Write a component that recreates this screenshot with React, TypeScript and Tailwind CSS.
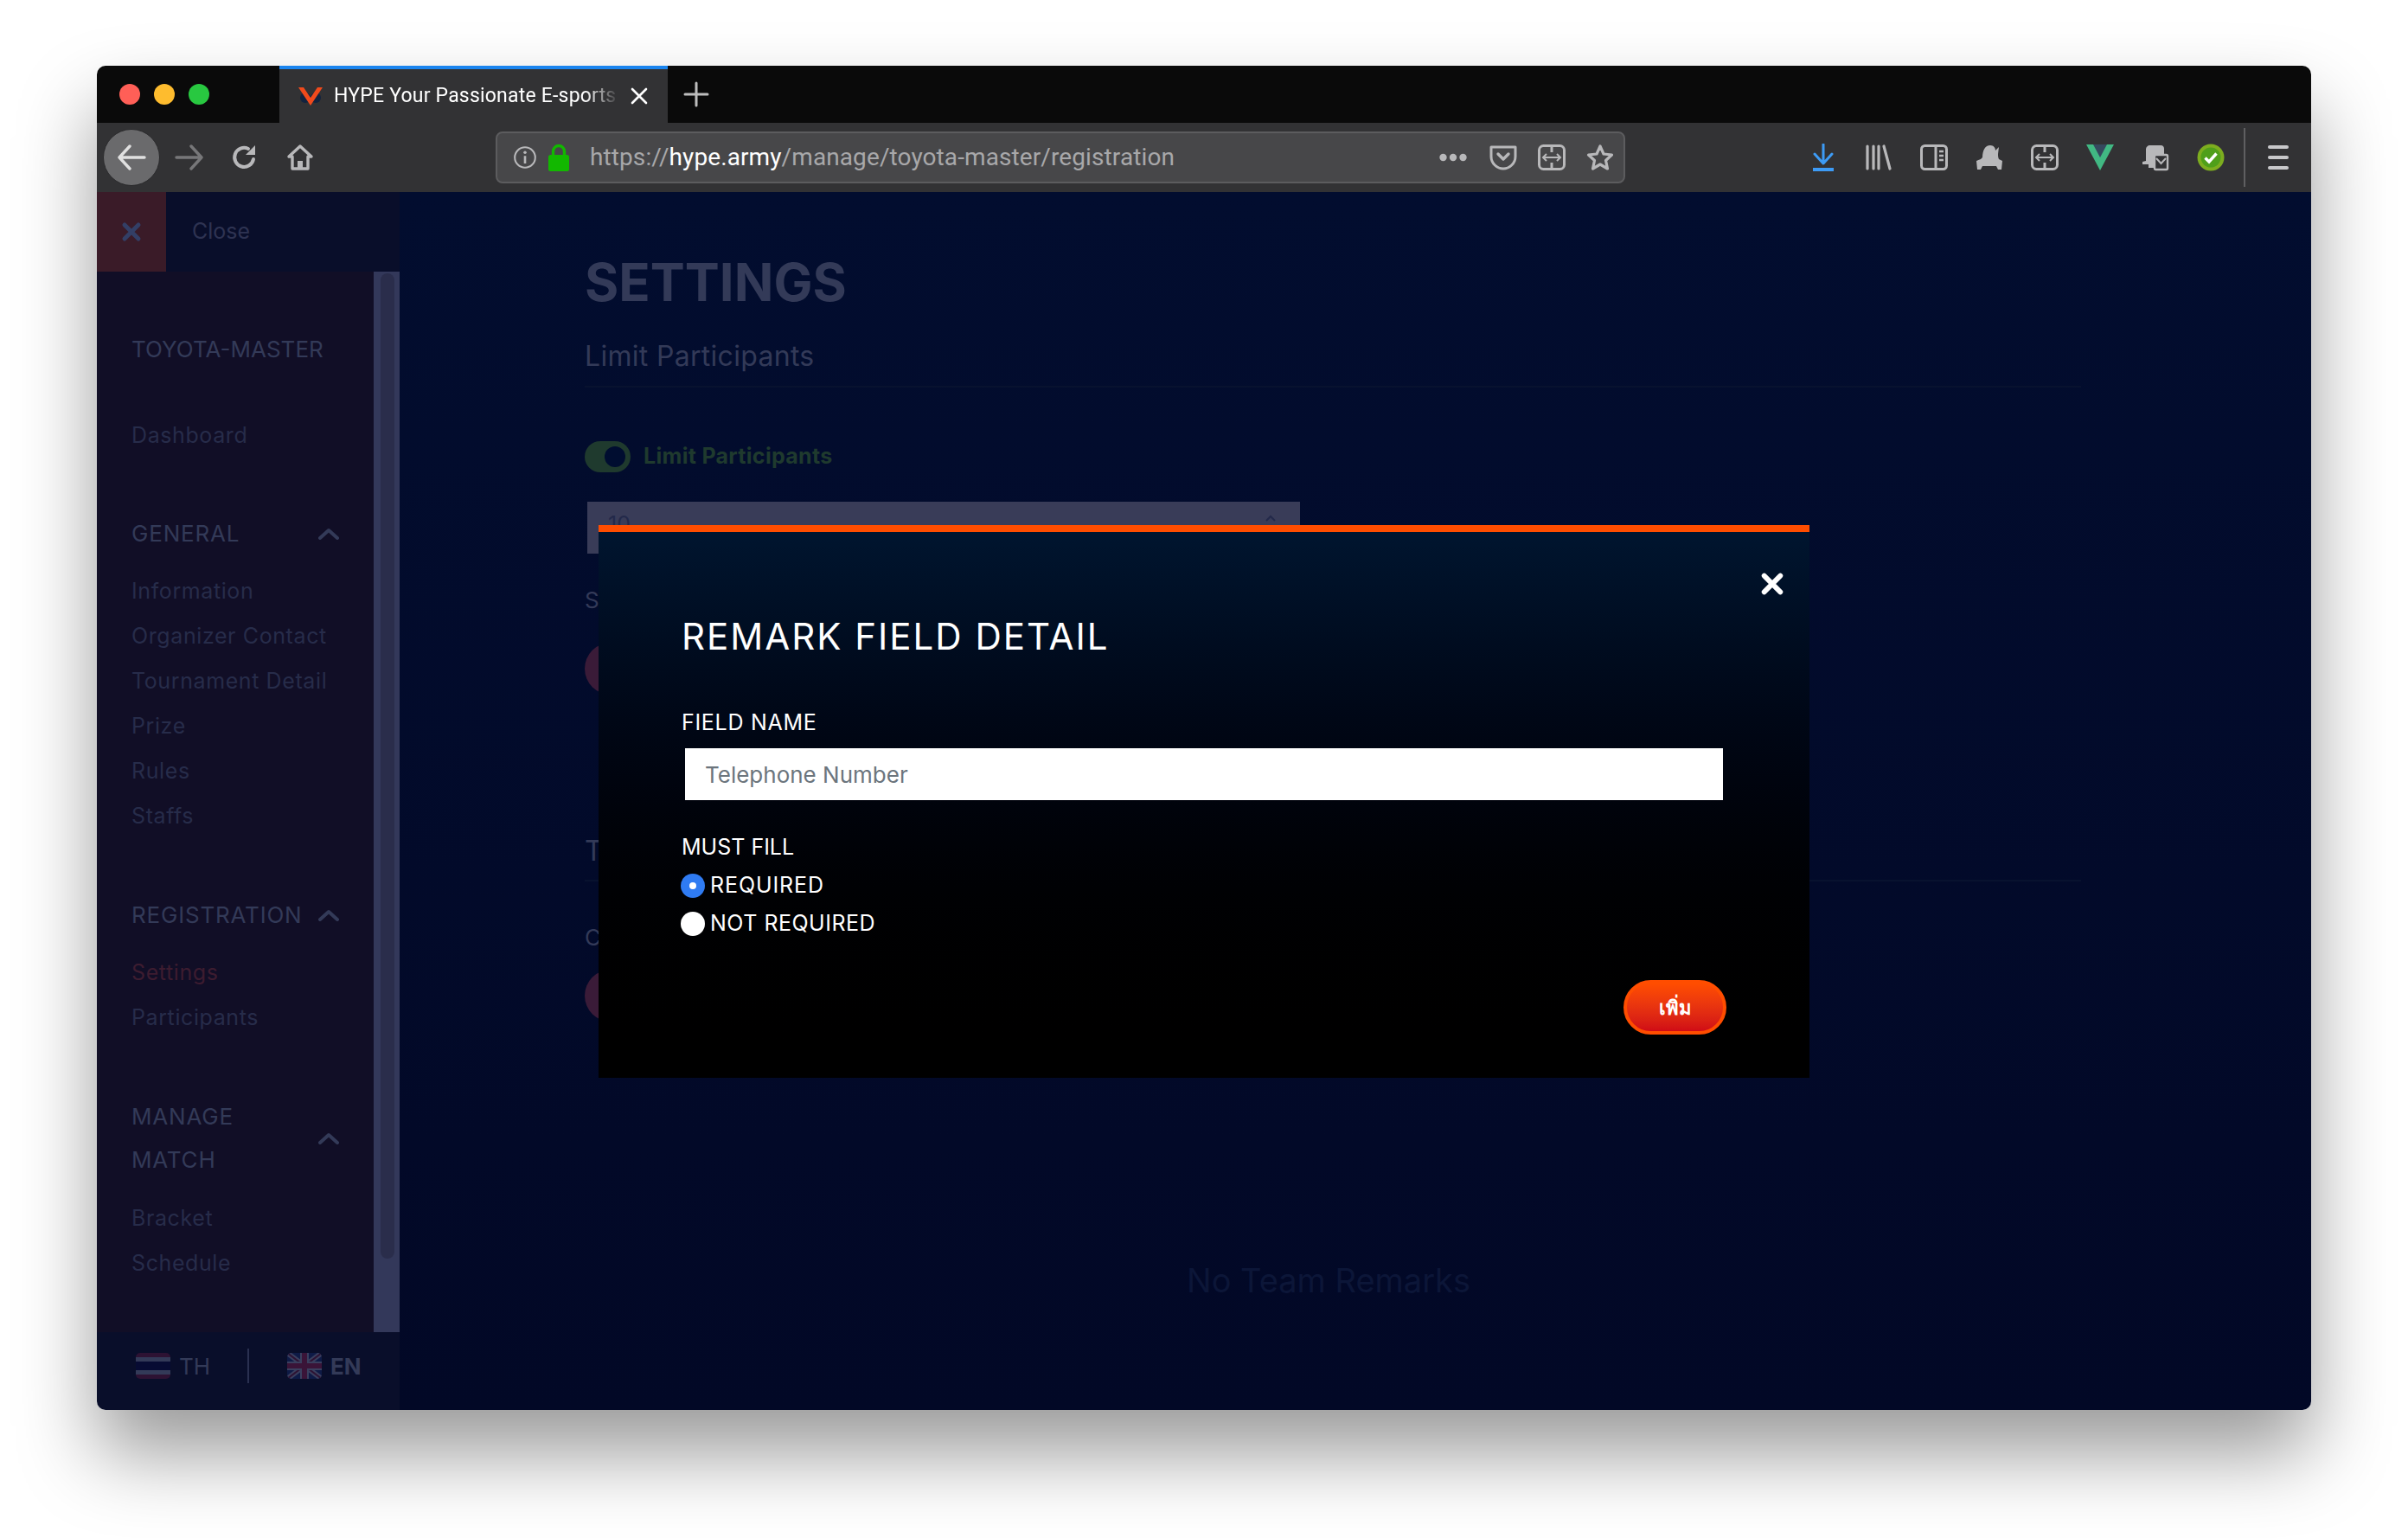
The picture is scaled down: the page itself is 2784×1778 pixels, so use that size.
import React from "react";

const G = "#b8b8ba";
const sans = "font-['Inter','Noto_Sans',sans-serif]";

function X({ size, color, w = 4 }: { size: number; color: string; w?: number }) {
  return (
    <svg width={size} height={size} viewBox="0 0 24 24" fill="none">
      <path d="M4 4L20 20M20 4L4 20" stroke={color} strokeWidth={w} strokeLinecap="round" />
    </svg>
  );
}

function Chevron() {
  return (
    <svg width="24" height="14" viewBox="0 0 24 14" fill="none">
      <path d="M2 12L12 3L22 12" stroke="#333a58" strokeWidth="4" strokeLinecap="round" strokeLinejoin="round" />
    </svg>
  );
}

function Icon({ w = 32, h = 32, vb = "0 0 32 32", children }: { w?: number; h?: number; vb?: string; children: React.ReactNode }) {
  return (
    <svg width={w} height={h} viewBox={vb} fill="none" className="shrink-0">
      {children}
    </svg>
  );
}

function ExtIcon() {
  return (
    <Icon>
      <rect x="1.5" y="2.5" width="29" height="27" rx="5" stroke={G} strokeWidth="3" />
      <path d="M16 3V10M16 22V29" stroke={G} strokeWidth="3" />
      <path d="M6 16H26M10 12L6 16L10 20M22 12L26 16L22 20" stroke={G} strokeWidth="2" />
    </Icon>
  );
}

function NavHead({ children }: { children: React.ReactNode }) {
  return (
    <div className="flex items-center justify-between pr-[40px] text-[26px] text-[#333a58]">
      <span className="leading-[50px] tracking-[0.8px]">{children}</span>
      <Chevron />
    </div>
  );
}

function NavItem({ label, red }: { label: string; red?: boolean }) {
  return (
    <div className={`h-[52px] flex items-center text-[25px] tracking-[0.6px] ${red ? "text-[#3d1c30]" : "text-[#272c4a]"}`}>
      {label}
    </div>
  );
}

function Radio({ checked, label, track }: { checked?: boolean; label: string; track: string }) {
  return (
    <div className="h-[44px] flex items-center gap-[6px]">
      <div className={`w-[28px] h-[28px] rounded-full flex items-center justify-center ${checked ? "bg-[#2f7bf2]" : "bg-white"}`}>
        {checked && <div className="w-[8px] h-[8px] rounded-full bg-white" />}
      </div>
      <span className={`text-[25px] text-white ${track}`}>{label}</span>
    </div>
  );
}

export default function App() {
  return (
    <div className={`w-[2784px] h-[1778px] bg-white pl-[112px] pt-[76px] overflow-hidden ${sans}`}>
      <div className="relative w-[2560px] h-[1554px] rounded-[10px] overflow-hidden flex flex-col shadow-[0_50px_90px_rgba(0,0,0,0.4)]">
        {/* tab bar */}
        <div className="h-[66px] bg-[#0a0a0a] flex items-stretch shrink-0">
          <div className="w-[211px] flex items-center pl-[26px] gap-[16px]">
            <div className="w-[24px] h-[24px] rounded-full bg-[#ff5f57]" />
            <div className="w-[24px] h-[24px] rounded-full bg-[#febc2e]" />
            <div className="w-[24px] h-[24px] rounded-full bg-[#28c840]" />
          </div>
          <div className="w-[449px] bg-[#323234] border-t-[4px] border-[#1a84ee] flex items-center pl-[21px] relative">
            <svg width="30" height="26" viewBox="0 0 30 26" className="shrink-0">
              <circle cx="9" cy="15" r="6" fill="#12233f" />
              <circle cx="21" cy="15" r="6" fill="#12233f" />
              <path d="M1 3H7L15 15L23 3H29L15 24Z" fill="#f04a1c" />
            </svg>
            <span className="ml-[12px] text-[23px] tracking-[0.2px] text-white whitespace-nowrap w-[330px] overflow-hidden font-['Roboto',sans-serif] [mask-image:linear-gradient(90deg,black_88%,transparent)]">
              HYPE Your Passionate E-sports
            </span>
            <div className="absolute left-[404px] top-[19px]"><X size={24} color="#ffffff" w={2.6} /></div>
          </div>
          <div className="flex items-center pl-[18px]">
            <svg width="30" height="30" viewBox="0 0 30 30"><path d="M15 2V28M2 15H28" stroke="#bdbdbd" strokeWidth="3" strokeLinecap="round" /></svg>
          </div>
        </div>

        {/* toolbar */}
        <div className="h-[80px] bg-[#323234] flex items-center shrink-0 relative">
          <div className="ml-[7px] w-[66px] h-[66px] rounded-full bg-[#6a6a6c] border border-[#2a2a2c] flex items-center justify-center">
            <svg width="34" height="30" viewBox="0 0 34 30" fill="none"><path d="M32 15H3M15 2L3 15L15 28" stroke="#e0e0e0" strokeWidth="3.4" strokeLinecap="round" strokeLinejoin="round" /></svg>
          </div>
          <div className="ml-[17px]">
            <svg width="34" height="30" viewBox="0 0 34 30" fill="none"><path d="M2 15H31M19 2L31 15L19 28" stroke="#777779" strokeWidth="3.4" strokeLinecap="round" strokeLinejoin="round" /></svg>
          </div>
          <div className="ml-[31px]">
            <Icon>
              <path d="M26 18A11 11 0 1 1 20 6" stroke={G} strokeWidth="4" strokeLinecap="round" />
              <path d="M28 2V13H17Z" fill={G} />
            </Icon>
          </div>
          <div className="ml-[32px]">
            <Icon>
              <path d="M16 3L3 15H7V29H25V15H29Z" stroke={G} strokeWidth="3.4" strokeLinejoin="round" />
              <path d="M13 29V20H19V29Z" fill={G} />
            </Icon>
          </div>
          {/* url bar */}
          <div className="ml-[210px] w-[1306px] h-[60px] rounded-[8px] bg-[#474749] border-2 border-[#5c5c5e] flex items-center pl-[18px] pr-[11px] font-['Roboto',sans-serif]">
            <Icon w={28} h={28}>
              <circle cx="16" cy="16" r="13.5" stroke={G} strokeWidth="2.4" />
              <circle cx="16" cy="9.5" r="2" fill={G} />
              <path d="M16 14V24" stroke={G} strokeWidth="3" />
            </Icon>
            <div className="ml-[12px]">
              <svg width="26" height="32" viewBox="0 0 26 32" fill="none">
                <path d="M6.5 14V9A6.5 6.5 0 0 1 19.5 9V14" stroke="#12b800" strokeWidth="3.4" />
                <rect x="1" y="13" width="24" height="19" rx="2.5" fill="#12b800" />
              </svg>
            </div>
            <span className="ml-[23px] text-[28px] tracking-[0.1px] text-[#a8a8aa] whitespace-nowrap">
              https://<span className="text-white">hype.army</span>/manage/toyota-master/registration
            </span>
            <div className="ml-auto flex items-center">
              <svg width="32" height="10" viewBox="0 0 32 10" className="mr-[26px]">
                <circle cx="4.5" cy="5" r="4.2" fill={G} /><circle cx="16" cy="5" r="4.2" fill={G} /><circle cx="27.5" cy="5" r="4.2" fill={G} />
              </svg>
              <div className="mr-[24px]">
                <Icon>
                  <path d="M2 4H30V15C30 23 23 29 16 29C9 29 2 23 2 15Z" stroke={G} strokeWidth="3" strokeLinejoin="round" />
                  <path d="M10 12L16 18L22 12" stroke={G} strokeWidth="3.4" strokeLinecap="round" strokeLinejoin="round" />
                </Icon>
              </div>
              <div className="mr-[24px]"><ExtIcon /></div>
              <Icon>
                <path d="M16 3L20 12L29.5 13L22.5 19.5L24.5 29L16 24L7.5 29L9.5 19.5L2.5 13L12 12Z" stroke={G} strokeWidth="3.2" strokeLinejoin="round" />
              </Icon>
            </div>
          </div>
          {/* right icons */}
          <div className="absolute left-[1964px] top-0 h-full flex items-center">
            <div className="w-[64px] flex justify-center">
              <svg width="26" height="32" viewBox="0 0 26 32" fill="none">
                <path d="M13 1V22M3 12L13 23L23 12" stroke="#3d9bf5" strokeWidth="3" strokeLinecap="round" strokeLinejoin="round" />
                <rect x="1" y="28" width="24" height="4" fill="#3d9bf5" />
              </svg>
            </div>
            <div className="w-[64px] flex justify-center">
              <Icon>
                <path d="M3 3V29M10 3V29M16 3V29M22 3L29 29" stroke={G} strokeWidth="3.2" strokeLinecap="round" />
              </Icon>
            </div>
            <div className="w-[64px] flex justify-center">
              <Icon>
                <rect x="1.5" y="2.5" width="29" height="27" rx="4" stroke={G} strokeWidth="3" />
                <path d="M18 3V29" stroke={G} strokeWidth="3" />
                <path d="M22 9H27M22 14H27M22 19H27" stroke={G} strokeWidth="2.4" />
              </Icon>
            </div>
            <div className="w-[64px] flex justify-center">
              <Icon>
                <path d="M8 16C8 8 11 2 17 2C21 2 23 5 23 8L27 4L26 12C26 14 26 16 27 18L31 20L30 30H26L24 26H8L6 30H2L1 20L6 18Z" fill={G} />
              </Icon>
            </div>
            <div className="w-[64px] flex justify-center"><ExtIcon /></div>
            <div className="w-[64px] flex justify-center">
              <svg width="32" height="30" viewBox="0 0 32 30">
                <path d="M0 0H32L16 30Z" fill="#41b883" />
                <path d="M8 0H24L16 15Z" fill="#35495e" />
              </svg>
            </div>
            <div className="w-[64px] flex justify-center">
              <Icon>
                <path d="M5 20V7C5 4 7 2 10 2H22C25 2 26 4 26 6V12H16V28H8V24H1V21Z" fill={G} />
                <rect x="15" y="13" width="15" height="17" rx="1.5" fill="#323234" stroke={G} strokeWidth="2.4" />
                <path d="M17 17L22.5 23L28 17" stroke={G} strokeWidth="2" />
              </Icon>
            </div>
            <div className="w-[64px] flex justify-center">
              <svg width="32" height="32" viewBox="0 0 32 32">
                <circle cx="16" cy="16" r="15.5" fill="#7dad1f" />
                <circle cx="16" cy="16" r="11.5" fill="#4f9f1a" />
                <path d="M9.5 16.5L14 21L22.5 11.5" stroke="#fff" strokeWidth="3.4" fill="none" />
              </svg>
            </div>
          </div>
          <div className="absolute left-[2482px] top-[6px] h-[68px] w-[2px] bg-[#5f5f61]" />
          <div className="absolute left-[2510px] top-[26px] flex flex-col gap-[8px]">
            <div className="w-[24px] h-[4px] rounded-full bg-[#c8c8ca]" />
            <div className="w-[24px] h-[4px] rounded-full bg-[#c8c8ca]" />
            <div className="w-[24px] h-[4px] rounded-full bg-[#c8c8ca]" />
          </div>
        </div>

        {/* page */}
        <div className="flex-1 flex min-h-0">
          {/* sidebar */}
          <aside className="w-[350px] flex flex-col shrink-0">
            <div className="h-[92px] flex items-center bg-[#090e2a] shrink-0">
              <div className="w-[80px] h-full bg-[#3a1b28] flex items-center justify-center">
                <X size={24} color="#333f66" w={5} />
              </div>
              <span className="ml-[30px] text-[25px] text-[#2e3352]">Close</span>
            </div>
            <div className="flex-1 flex min-h-0 bg-[#110e26]">
              <nav className="flex-1 pl-[40px] pt-[63px] min-w-0">
                <div className="h-[52px] flex items-center text-[26px] text-[#333a58]">TOYOTA-MASTER</div>
                <div className="mt-[49px]"><NavItem label="Dashboard" /></div>
                <div className="mt-[62px]"><NavHead>GENERAL</NavHead></div>
                <div className="mt-[16px]">
                  <NavItem label="Information" />
                  <NavItem label="Organizer Contact" />
                  <NavItem label="Tournament Detail" />
                  <NavItem label="Prize" />
                  <NavItem label="Rules" />
                  <NavItem label="Staffs" />
                </div>
                <div className="mt-[63px]"><NavHead>REGISTRATION</NavHead></div>
                <div className="mt-[16px]">
                  <NavItem label="Settings" red />
                  <NavItem label="Participants" />
                </div>
                <div className="mt-[63px]">
                  <NavHead>MANAGE<br />MATCH</NavHead>
                </div>
                <div className="mt-[17px]">
                  <NavItem label="Bracket" />
                  <NavItem label="Schedule" />
                </div>
              </nav>
              <div className="w-[30px] bg-[#33385a] shrink-0 pl-[8px] pt-[2px]">
                <div className="w-[16px] h-[1139px] rounded-full bg-[#2a2d4b]" />
              </div>
            </div>
            <div className="h-[90px] bg-[#090e2a] flex items-center pl-[45px] shrink-0 text-[26px] text-[#333a58] pb-[12px]">
              <svg width="40" height="30" viewBox="0 0 40 30">
                <clipPath id="a"><rect width="40" height="30" rx="5" /></clipPath>
                <g clipPath="url(#a)">
                  <rect width="40" height="30" fill="#2d1233" />
                  <rect y="5" width="40" height="20" fill="#333a58" />
                  <rect y="10" width="40" height="10" fill="#070b33" />
                </g>
              </svg>
              <span className="ml-[10px] w-[35px]">TH</span>
              <div className="ml-[44px] w-[2px] h-[40px] bg-[#2a3050]" />
              <svg width="40" height="30" viewBox="0 0 40 30" className="ml-[44px]">
                <clipPath id="b"><rect width="40" height="30" rx="5" /></clipPath>
                <g clipPath="url(#b)">
                  <rect width="40" height="30" fill="#0e1a46" />
                  <path d="M0 0L40 30M40 0L0 30" stroke="#3a3f5e" strokeWidth="6" />
                  <path d="M0 0L40 30M40 0L0 30" stroke="#2d1233" strokeWidth="2" />
                  <path d="M20 0V30M0 15H40" stroke="#3a3f5e" strokeWidth="10" />
                  <path d="M20 0V30M0 15H40" stroke="#3a1438" strokeWidth="6" />
                </g>
              </svg>
              <span className="ml-[10px] font-bold">EN</span>
            </div>
          </aside>

          {/* main */}
          <main className="flex-1 min-w-0 bg-gradient-to-b from-[#020d2f] to-[#020826] pl-[214px] pr-[266px] pt-[64px] text-[#333a58]">
            <h1 className="text-[60px] leading-[80px] font-bold">SETTINGS</h1>
            <div className="mt-[24px] text-[32px] leading-[44px] tracking-[0.3px] pb-[12px] border-b-2 border-[#08122f]">Limit Participants</div>
            <div className="mt-[61px] flex items-center">
              <div className="w-[53px] h-[36px] rounded-full bg-[#1f3a2e] flex items-center justify-end pr-[6px]">
                <div className="w-[24px] h-[24px] rounded-full bg-[#000d30]" />
              </div>
              <span className="ml-[15px] text-[25px] tracking-[0.3px] font-bold text-[#1f3a2e]">Limit Participants</span>
            </div>
            <div className="mt-[33px] ml-[3px] w-[824px] h-[60px] bg-[#393c58] pl-[24px] flex justify-between pr-[24px] text-[#23294a] text-[25px]">
              <span className="mt-[8px]">10</span>
              <svg width="20" height="20" viewBox="0 0 20 20" fill="none" className="mt-[10px]"><path d="M5 12L10 7L15 12" stroke="#23294a" strokeWidth="2" /></svg>
            </div>
            <div className="mt-[39px] text-[26px] leading-[30px]">S</div>
            <div className="mt-[34px] w-[60px] h-[60px] rounded-full bg-[#3a1b38]" />
            <div className="mt-[159px] text-[32px] leading-[44px] pb-[11px] border-b-2 border-[#08122f]">T</div>
            <div className="mt-[50px] text-[26px] leading-[30px]">C</div>
            <div className="mt-[22px] w-[60px] h-[60px] rounded-full bg-[#3a1b38]" />
            <div className="mt-[271px] ml-[696px] text-[38px] text-[#0c1638] whitespace-nowrap">No Team Remarks</div>
          </main>
        </div>

        {/* modal */}
        <div className="absolute left-[580px] top-[531px] w-[1400px] h-[639px] border-t-[8px] border-[#ff4d00] bg-gradient-to-b from-[#00152f] to-black pl-[96px] pr-[96px] pt-[96px]">
          <div className="absolute left-[1343px] top-[46px]"><X size={28} color="#ffffff" w={5} /></div>
          <h2 className="text-[42px] leading-[50px] tracking-[2px] text-white whitespace-nowrap">REMARK FIELD DETAIL</h2>
          <div className="mt-[59px] text-[25px] leading-[30px] tracking-[0.7px] text-white">FIELD NAME</div>
          <input
            readOnly
            placeholder="Telephone Number"
            className="mt-[15px] ml-[4px] block w-[1200px] h-[60px] bg-white pl-[23px] text-[26px] outline-none placeholder:text-[#6c757d]"
          />
          <div className="mt-[39px] text-[25px] leading-[30px] text-white">MUST FILL</div>
          <div className="mt-[8px] -ml-[1px]">
            <Radio checked label="REQUIRED" track="tracking-[0.9px]" />
            <Radio label="NOT REQUIRED" track="tracking-[0.5px]" />
          </div>
          <div className="mt-[43px] flex justify-end">
            <button className="w-[119px] h-[63px] rounded-full border-[4px] border-[#ff4d00] bg-gradient-to-b from-[#ff4d00] to-[#d00a16] text-white text-[22px] font-bold font-['Noto_Sans','DejaVu_Sans',sans-serif]">
              เพิ่ม
            </button>
          </div>
        </div>
      </div>
    </div>
  );
}
